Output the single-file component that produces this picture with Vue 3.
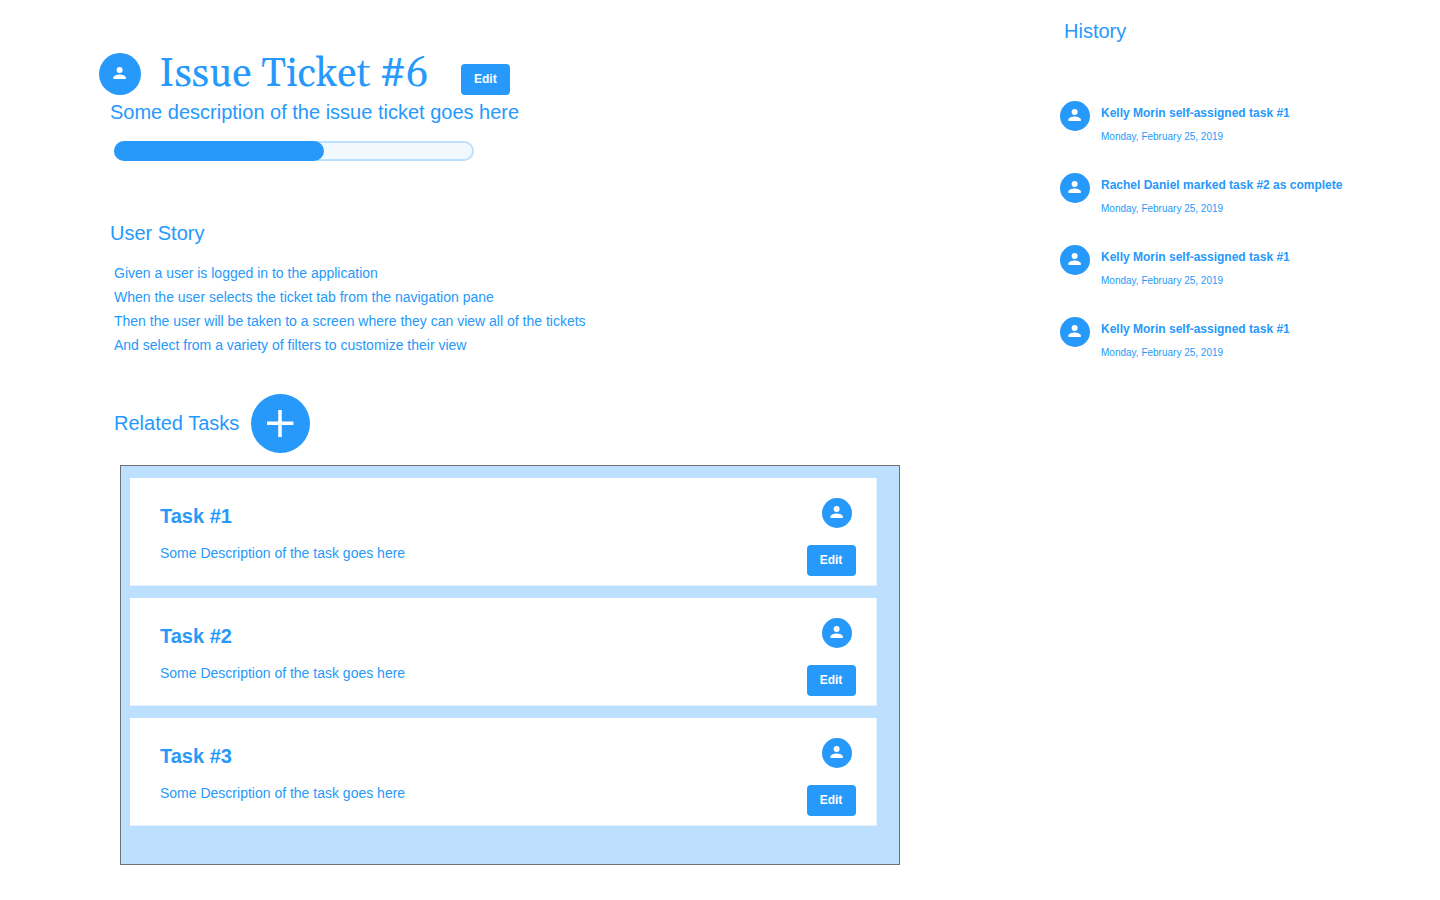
<script setup>
import { h } from 'vue'

const story = [
  'Given a user is logged in to the application',
  'When the user selects the ticket tab from the navigation pane',
  'Then the user will be taken to a screen where they can view all of the tickets',
  'And select from a variety of filters to customize their view',
]

const tasks = [1, 2, 3].map((id) => ({
  id,
  title: `Task #${id}`,
  description: 'Some Description of the task goes here',
}))

const date = 'Monday, February 25, 2019'
const events = [
  { id: 1, text: 'Kelly Morin self-assigned task #1', date },
  { id: 2, text: 'Rachel Daniel marked task #2 as complete', date },
  { id: 3, text: 'Kelly Morin self-assigned task #1', date },
  { id: 4, text: 'Kelly Morin self-assigned task #1', date },
]

const completed = 58.4

const PersonIcon = () =>
  h('svg', { viewBox: '0 0 24 24', width: 18, height: 18, fill: '#fff', 'aria-hidden': 'true' }, [
    h('circle', { cx: 11.5, cy: 8, r: 4 }),
    h('path', { d: 'M11.5 14c-2.8 0-8.3 1.34-8.3 4v2h16.6v-2c0-2.66-5.5-4-8.3-4z' }),
  ])
</script>

<template>
  <div class="page">
    <main class="ticket">
      <header class="head">
        <span class="avatar avatar-large"><PersonIcon /></span>
        <h1>Issue Ticket #6</h1>
        <button type="button" class="edit">Edit</button>
      </header>
      <p class="summary">Some description of the issue ticket goes here</p>
      <div class="progress" role="progressbar" aria-label="Ticket progress" :aria-valuenow="completed">
        <div class="fill" :style="{ width: completed + '%' }"></div>
      </div>

      <section class="story">
        <h2>User Story</h2>
        <p v-for="line in story" :key="line">{{ line }}</p>
      </section>

      <section class="related">
        <div class="related-head">
          <h2>Related Tasks</h2>
          <button type="button" class="add" aria-label="Add task">
            <svg viewBox="0 0 27 27" width="27" height="27" aria-hidden="true">
              <path d="M13 0v27M0 13.3h26.4" stroke="#fff" stroke-width="3.5" />
            </svg>
          </button>
        </div>
        <div class="panel">
          <article v-for="task in tasks" :key="task.id" class="card">
            <div class="card-text">
              <h3>{{ task.title }}</h3>
              <p>{{ task.description }}</p>
            </div>
            <div class="card-side">
              <span class="avatar"><PersonIcon /></span>
              <button type="button" class="edit" :aria-label="'Edit ' + task.title">Edit</button>
            </div>
          </article>
        </div>
      </section>
    </main>

    <aside class="history">
      <h2>History</h2>
      <ul>
        <li v-for="event in events" :key="event.id">
          <span class="avatar"><PersonIcon /></span>
          <div>
            <strong>{{ event.text }}</strong>
            <time datetime="2019-02-25">{{ event.date }}</time>
          </div>
        </li>
      </ul>
    </aside>
  </div>
</template>

<style>
body {
  margin: 0;
  background: #fff;
}
</style>

<style scoped>
.page {
  display: grid;
  grid-template-columns: minmax(0, 1fr) 380px;
  color: #2699fb;
  font-family: Arial, "Liberation Sans", sans-serif;
  font-size: 14px;
  line-height: 24px;
}
h1,
h2,
h3,
p,
ul {
  margin: 0;
  padding: 0;
}
h2 {
  font-size: 20px;
  font-weight: 400;
}
button {
  border: 0;
  padding: 0;
  font-family: inherit;
  color: #fff;
  background: #2699fb;
  cursor: pointer;
}
.ticket {
  padding: 48px 160px 35px 110px;
}
.head {
  display: flex;
  align-items: center;
  margin-left: -11px;
  height: 52px;
}
.head h1 {
  margin: 0 33px 0 18px;
  padding-top: 2px;
  font-family: Georgia, Gelasio, "Liberation Serif", serif;
  font-size: 40px;
  font-weight: 400;
  line-height: 48px;
}
.head .edit {
  margin-top: 11px;
}
.avatar {
  display: flex;
  flex: none;
  align-items: center;
  justify-content: center;
  width: 30px;
  height: 30px;
  padding-bottom: 2px;
  box-sizing: border-box;
  border-radius: 50%;
  background: #2699fb;
}
.avatar-large {
  width: 42px;
  height: 42px;
}
.edit {
  flex: none;
  width: 49px;
  height: 31px;
  padding: 0 1px 2px 0;
  border-radius: 4px;
  font-size: 12px;
  font-weight: 700;
}
.summary {
  font-size: 20px;
}
.progress {
  max-width: 360px;
  height: 20px;
  margin: 17px 0 0 4px;
  border-radius: 10px;
  background: #f1f9ff;
  box-shadow: inset 0 0 0 2px #bce0fd;
}
.fill {
  height: 100%;
  border-radius: 10px;
  background: #2699fb;
}
.story {
  margin-top: 60px;
}
.story h2 {
  margin-bottom: 16px;
}
.story p {
  margin-left: 4px;
}
.related {
  margin-top: 37px;
}
.related-head {
  display: flex;
  align-items: center;
  gap: 12px;
  margin-left: 4px;
}
.related-head h2 {
  padding-bottom: 2px;
}
.add {
  display: flex;
  align-items: center;
  justify-content: center;
  width: 59px;
  height: 59px;
  border-radius: 50%;
}
.panel {
  display: flex;
  flex-direction: column;
  gap: 12px;
  margin: 12px 0 0 10px;
  padding: 12px 22px 38px 9px;
  border: 1px solid #707070;
  background: #bce0fd;
}
.card {
  display: flex;
  justify-content: space-between;
  box-sizing: border-box;
  min-height: 108px;
  padding: 20px 20px 9px 30px;
  border: solid #e3f2fe;
  border-width: 0 1px 1px 0;
  background: #fff;
}
.card-text h3 {
  margin: 6px 0 13px;
  font-size: 20px;
}
.card-side {
  display: flex;
  flex-direction: column;
  align-items: center;
  gap: 17px;
}
.card-side .avatar {
  margin-left: 11px;
}
.history {
  padding-top: 19px;
}
.history h2 {
  margin-left: 4px;
}
.history ul {
  display: grid;
  gap: 24px;
  margin-top: 58px;
  list-style: none;
}
.history li {
  display: flex;
  gap: 11px;
}
.history strong,
.history time {
  display: block;
}
.history strong {
  font-size: 12px;
}
.history time {
  font-size: 10px;
}
</style>
